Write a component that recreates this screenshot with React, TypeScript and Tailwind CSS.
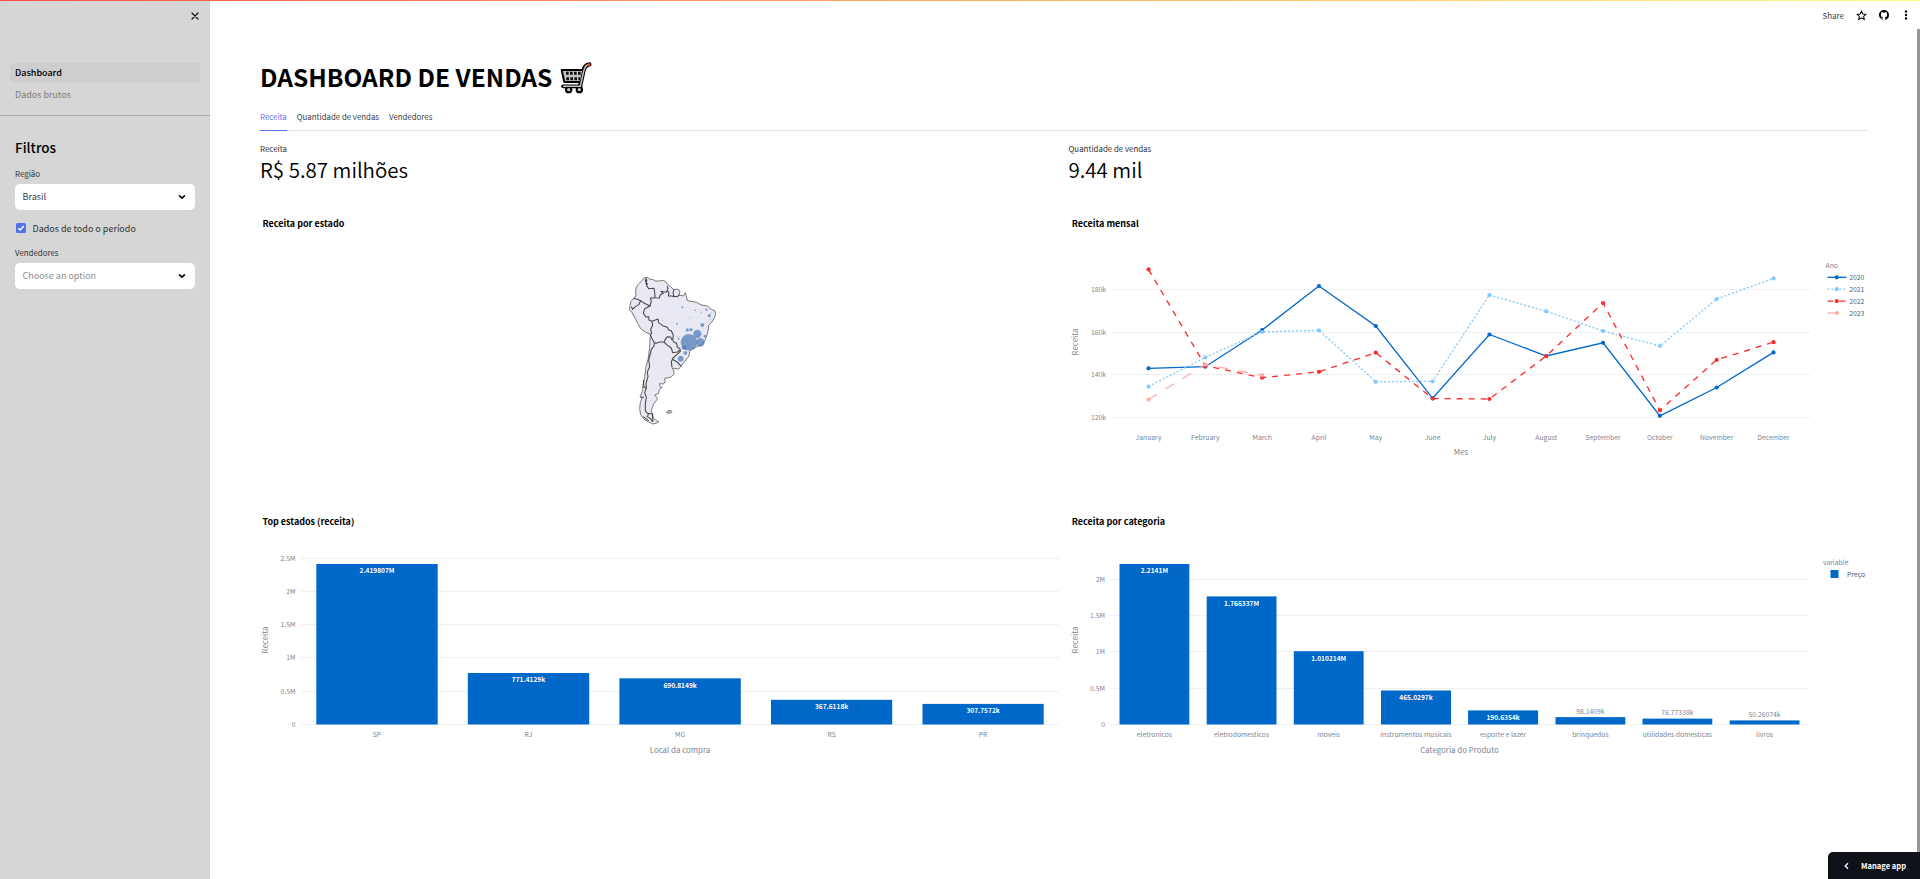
import React from "react";

const months = ["January", "February", "March", "April", "May", "June", "July", "August", "September", "October", "November", "December"];
const monthX = (i: number) => 1148 + i * 56.82;

const series = [
  { name: "2020", color: "#0068c9", dash: undefined, ys: [368.3, 366.7, 330, 286, 326, 398.3, 334.5, 356, 342.8, 415.8, 387.5, 352.4] },
  { name: "2021", color: "#83c9ff", dash: "2 2", ys: [386.6, 357.3, 332, 330.3, 381.8, 381.4, 295, 311.3, 331, 346, 299, 278.4] },
  { name: "2022", color: "#ff2b2b", dash: "6 6", ys: [269.4, 365.8, 377.7, 371.8, 352.7, 398.5, 399, 356, 303, 410.3, 359.8, 342.2] },
  { name: "2023", color: "#ffabab", dash: "10 10", ys: [399.5, 364.5, 375.2] },
];

type Bar = { label: string; x: number; w: number; top: number; value: string; outside?: boolean };

const stateBars: Bar[] = [
  { label: "SP", x: 316.3, w: 121.4, top: 564, value: "2.419807M" },
  { label: "RJ", x: 467.8, w: 121.4, top: 673, value: "771.4129k" },
  { label: "MG", x: 619.4, w: 121.4, top: 678.3, value: "690.8149k" },
  { label: "RS", x: 771, w: 121.2, top: 699.8, value: "367.6118k" },
  { label: "PR", x: 922.5, w: 121.2, top: 703.9, value: "307.7572k" },
];

const categoryBars: Bar[] = [
  { label: "eletronicos", x: 1119, w: 69.8, top: 564, value: "2.2141M" },
  { label: "eletrodomesticos", x: 1206.2, w: 69.8, top: 596.4, value: "1.766337M" },
  { label: "moveis", x: 1293.3, w: 69.8, top: 651.2, value: "1.010214M" },
  { label: "instrumentos musicais", x: 1380.5, w: 70, top: 690.5, value: "465.0297k" },
  { label: "esporte e lazer", x: 1467.6, w: 70, top: 710.4, value: "190.6354k" },
  { label: "brinquedos", x: 1555, w: 69.8, top: 717.1, value: "98.1409k", outside: true },
  { label: "utilidades domesticas", x: 1642, w: 69.8, top: 718.6, value: "76.77338k", outside: true },
  { label: "livros", x: 1729.2, w: 69.8, top: 720.4, value: "50.26074k", outside: true },
];

function ChartTitle({ x, y, children }: { x: number; y: number; children: string }) {
  return <text x={x} y={y} className="fill-black text-[9px] font-bold">{children}</text>;
}

function Grid({ x1, x2, ticks }: { x1: number; x2: number; ticks: [string, number][] }) {
  return (
    <>
      {ticks.map(([label, y]) => (
        <g key={label}>
          <rect x={x1} y={Math.floor(y)} width={x2 - x1} height={1} fill="#eef0f4" />
          <text x={x1 - 5.5} y={y + 2.8} textAnchor="end" className="fill-[#808495] text-[6.8px]">{label}</text>
        </g>
      ))}
    </>
  );
}

function AxisTitle({ x, y, vertical, children }: { x: number; y: number; vertical?: boolean; children: string }) {
  return (
    <text x={x} y={y} textAnchor="middle" transform={vertical ? `rotate(-90 ${x} ${y})` : undefined} className="fill-[#808495] text-[7.9px]">
      {children}
    </text>
  );
}

function Bars({ bars }: { bars: Bar[] }) {
  return (
    <>
      {bars.map((b) => (
        <g key={b.label}>
          <rect x={b.x} y={b.top} width={b.w} height={724.5 - b.top} fill="#0068c9" />
          {b.outside ? (
            <text x={b.x + b.w / 2} y={b.top - 3.6} textAnchor="middle" className="fill-[#808495] text-[6.8px]">{b.value}</text>
          ) : (
            <text x={b.x + b.w / 2} y={b.top + 9.3} textAnchor="middle" className="fill-white text-[6.6px] font-bold">{b.value}</text>
          )}
          <text x={b.x + b.w / 2} y={737} textAnchor="middle" className="fill-[#808495] text-[6.8px]">{b.label}</text>
        </g>
      ))}
    </>
  );
}

const bubbles: [number, number, number][] = [
  [267, 247, 25], [292, 222, 12.5], [301, 247, 13], [242, 296, 9], [253, 262, 8], [256, 279, 6], [307, 195, 6],
  [262, 210, 5], [273, 209, 5], [328, 167, 5], [315, 229, 4.5], [319, 149, 3.5], [231, 191, 3], [236, 236, 3],
  [247, 142, 3], [286, 151, 2.5], [304, 157, 1.8], [270, 173, 1.5], [187, 181, 1.5], [178, 140, 1], [333, 159, 1.5], [332, 176, 1.5], [236, 119, 1],
];

function MapChart() {
  return (
    <svg viewBox="260 205 799 297" className="h-[297px] w-[799px]">
      <ChartTitle x={262.5} y={227.4}>Receita por estado</ChartTitle>
      <g transform="translate(600 260) scale(0.33333)" strokeLinejoin="round">
        <path
          d="M140 52 L146 54 150 59 158 58 166 63 178 63 190 61 198 66 204 74 212 80 220 88 236 88 240 96 237 105 250 108 256 98 260 112 262 122 274 124 290 127 304 135 322 138 334 148 344 152 347 160 344 172 336 186 326 196 324 214 320 228 314 243 306 254 292 259 276 268 269 274 267 288 258 300 248 312 241 322 236 327 222 325 217 324 222 334 222 343 212 352 194 355 195 364 191 372 179 371 180 380 187 382 178 388 176 400 164 405 170 412 172 418 162 430 157 442 154 452 158 462 160 474 176 486 170 489 158 492 146 486 132 478 122 464 119 446 121 428 126 414 120 411 128 392 128 380 134 352 138 320 144 300 149 262 151 222 136 216 122 206 113 190 102 168 95 156 88 148 90 138 93 124 100 116 108 108 107 98 108 84 114 74 122 66 132 54 Z"
          fill="#e8e9f2" stroke="#777" strokeWidth="3"
        />
        <g fill="none" stroke="#484848" strokeWidth="3.2">
          <path d="M139 53 L136 62 143 73 138 70 141 58" />
          <path d="M138 62 L140 77 146 86 162 85 164 96 165 113 178 114 181 104 190 100 183 94 198 97 202 92 204 84 201 78" />
          <path d="M202 92 L207 98 205 108 216 108 222 110 219 98 222 88" />
          <path d="M219 109 L232 110 238 105" />
          <path d="M165 113 L151 115 154 124 150 138 138 132 130 128 122 122 112 118 100 115" />
          <path d="M122 122 L116 134 106 140 98 148 94 140" />
          <path d="M150 138 L134 146 130 160 138 171 146 170 147 180 156 184 174 177 176 188 188 197 202 202 206 210 214 212 220 226 218 240 222 246 230 250 232 262 240 266 241 274 228 286 219 294 214 306 216 322" />
          <path d="M156 184 L158 196 152 208 155 220 151 224 156 236 162 246 168 250 180 246 192 246 196 238 202 230 212 231 216 240" />
          <path d="M192 246 L200 254 214 264 218 278 232 276 240 270" />
          <path d="M217 298 L230 305 243 318" />
          <path d="M163 248 L162 258 154 268 150 286 146 300 149 320 142 336 144 350 138 370 139 384 134 398 139 412 136 430 136 452 142 460 156 462" />
          <path d="M157 462 L159 486 M146 460 L142 470 152 476 156 484 M130 470 L146 482" />
          <path d="M130 360 L132 382 138 384 M122 412 L132 412" />
        </g>
        <path d="M200 456 L206 451 216 453 214 458 202 460 Z M208 452 L207 459" fill="#e8e9f2" stroke="#666" strokeWidth="2.5" />
        {bubbles.map(([cx, cy, r]) => (
          <circle key={`${cx}-${cy}`} cx={cx} cy={cy} r={r} fill="#4c78b5" fillOpacity={0.72} stroke="#e8e9f2" strokeOpacity={0.5} strokeWidth={1} />
        ))}
      </g>
    </svg>
  );
}

function LineChart() {
  return (
    <svg viewBox="1068.5 205 799 297" className="h-[297px] w-[799px]">
      <ChartTitle x={1071.3} y={227.4}>Receita mensal</ChartTitle>
      <Grid x1={1111} x2={1810} ticks={[["180k", 289.3], ["160k", 332.3], ["140k", 374.5], ["120k", 417.3]]} />
      {series.map((s) => (
        <g key={s.name}>
          <polyline points={s.ys.map((y, i) => `${monthX(i)},${y}`).join(" ")} fill="none" stroke={s.color} strokeWidth={1.33} strokeDasharray={s.dash} />
          {s.ys.map((y, i) => <circle key={i} cx={monthX(i)} cy={y} r={2.1} fill={s.color} />)}
        </g>
      ))}
      {months.map((m, i) => (
        <text key={m} x={monthX(i)} y={440.2} textAnchor="middle" className="fill-[#808495] text-[6.8px]">{m}</text>
      ))}
      <AxisTitle x={1460.5} y={455}>Mes</AxisTitle>
      <AxisTitle x={1077.3} y={342} vertical>Receita</AxisTitle>
      <text x={1825} y={268} className="fill-[#808495] text-[6.8px]">Ano</text>
      {series.map((s, i) => (
        <g key={s.name}>
          <line x1={1827} x2={1846} y1={277.3 + i * 11.9} y2={277.3 + i * 11.9} stroke={s.color} strokeWidth={1.33} strokeDasharray={s.dash} />
          <circle cx={1836.3} cy={277.3 + i * 11.9} r={2.1} fill={s.color} />
          <text x={1848.8} y={280.1 + i * 11.9} className="fill-[#555867] text-[6.8px]">{s.name}</text>
        </g>
      ))}
    </svg>
  );
}

function StateChart() {
  return (
    <svg viewBox="260 502 799 297" className="h-[297px] w-[799px]">
      <ChartTitle x={262.5} y={524.6}>Top estados (receita)</ChartTitle>
      <Grid x1={301} x2={1059} ticks={[["2.5M", 558.4], ["2M", 591.4], ["1.5M", 624.5], ["1M", 657.6], ["0.5M", 691.3], ["0", 724.4]]} />
      <Bars bars={stateBars} />
      <AxisTitle x={680} y={753}>Local da compra</AxisTitle>
      <AxisTitle x={268.3} y={640} vertical>Receita</AxisTitle>
    </svg>
  );
}

function CategoryChart() {
  return (
    <svg viewBox="1068.5 502 799 297" className="h-[297px] w-[799px]">
      <ChartTitle x={1071.3} y={524.6}>Receita por categoria</ChartTitle>
      <Grid x1={1110} x2={1808.3} ticks={[["2M", 579.3], ["1.5M", 615.5], ["1M", 651.5], ["0.5M", 688.5], ["0", 724.4]]} />
      <Bars bars={categoryBars} />
      <AxisTitle x={1459} y={753}>Categoria do Produto</AxisTitle>
      <AxisTitle x={1077.3} y={640} vertical>Receita</AxisTitle>
      <text x={1822.5} y={565} className="fill-[#808495] text-[6.8px]">variable</text>
      <rect x={1830} y={570} width={8} height={8} fill="#0068c9" />
      <text x={1846.5} y={577.2} className="fill-[#555867] text-[6.8px]">Preço</text>
    </svg>
  );
}

function Cart() {
  return (
    <svg viewBox="0 0 96 96" className="h-8 w-8" strokeLinejoin="round" strokeLinecap="round">
      <path d="M61 68 L70 28 Q74 8 88 7" fill="none" stroke="#000" strokeWidth="13" />
      <path d="M5 24 H70 L62 60 H13 Z" fill="#c4c4c4" stroke="#000" strokeWidth="6" />
      <path d="M9 73 H62" stroke="#000" strokeWidth="11" />
      <circle cx="26" cy="83" r="8" fill="#c4c4c4" stroke="#000" strokeWidth="6" />
      <circle cx="58" cy="83" r="8" fill="#c4c4c4" stroke="#000" strokeWidth="6" />
      <path d="M11 73 H61 L71 28 Q75 12 82 9" fill="none" stroke="#c4c4c4" strokeWidth="4.5" />
      <path d="M83 8.5 L88 7.5" stroke="#f0503f" strokeWidth="7" />
      <path d="M18 34 H62 M19 50 H60" stroke="#111" strokeWidth="9" strokeDasharray="8 4" strokeLinecap="butt" />
    </svg>
  );
}

function Select({ value, muted }: { value: string; muted?: boolean }) {
  return (
    <div className="flex h-[26px] w-[180px] items-center justify-between rounded-[5px] bg-white pl-[7.5px] pr-[9.5px]">
      <span className={muted ? "text-[9px] text-[#8f8f8f]" : "text-[9px] text-[#404040]"}>{value}</span>
      <svg viewBox="0 0 8 8" className="h-2 w-2">
        <path d="M1.6 2.9 L4 5.2 L6.4 2.9" fill="none" stroke="#000" strokeWidth="1.6" strokeLinecap="round" strokeLinejoin="round" />
      </svg>
    </div>
  );
}

function Sidebar() {
  return (
    <aside className="flex w-[210px] shrink-0 flex-col bg-[#d6d6d6]">
      <div className="flex h-[63px] justify-end pr-[11px] pt-[12px]">
        <svg viewBox="0 0 8 8" className="h-2 w-2">
          <path d="M1 1 L7 7 M7 1 L1 7" stroke="#111" strokeWidth="1.2" strokeLinecap="round" />
        </svg>
      </div>
      <nav className="flex flex-col gap-[2px] border-b border-[#a9a9a9] px-[10px] pb-[10px]">
        <a className="flex h-5 items-center rounded-[3px] bg-[#cecece] px-[5px] text-[9px] font-medium text-black">Dashboard</a>
        <a className="flex h-5 items-center px-[5px] text-[9px] text-[#7d7d7d]">Dados brutos</a>
      </nav>
      <div className="flex flex-col px-[15px] pt-[21px]">
        <h2 className="h-[20px] text-[13.5px] leading-[21px] font-medium text-black">Filtros</h2>
        <label className="mt-[9px] h-[18px] text-[7.9px] leading-[16px] text-[#333]">Região</label>
        <Select value="Brasil" />
        <label className="mt-[10px] flex h-4 items-center gap-[6.5px] pl-[1px] text-[9px] text-[#333]">
          <span className="flex h-[10px] w-[10px] items-center justify-center rounded-[1.5px] bg-[#546ff0]">
            <svg viewBox="0 0 10 10" className="h-[10px] w-[10px]">
              <path d="M2.2 5.2 L4.2 7 L7.8 3" fill="none" stroke="#fff" strokeWidth="1.5" />
            </svg>
          </span>
          <span className="pt-px">Dados de todo o período</span>
        </label>
        <label className="mt-[9px] h-[18px] text-[7.9px] leading-[16px] text-[#333]">Vendedores</label>
        <Select value="Choose an option" muted />
      </div>
    </aside>
  );
}

function Toolbar() {
  return (
    <header className="flex h-[28px] items-center justify-end pr-[10px] pt-[2px]">
      <span className="mr-[12px] pt-px text-[8px] text-[#404040]">Share</span>
      <svg viewBox="0 0 24 24" className="mr-[12px] h-[11px] w-[11px]" fill="none" stroke="#000" strokeWidth="2.2">
        <path d="M12 2.5 L14.9 8.8 L21.7 9.5 L16.6 14.1 L18.1 20.9 L12 17.3 L5.9 20.9 L7.4 14.1 L2.3 9.5 L9.1 8.8 Z" />
      </svg>
      <svg viewBox="0 0 16 16" className="mr-[13px] h-[10px] w-[10px]">
        <path d="M8 0C3.58 0 0 3.58 0 8c0 3.54 2.29 6.53 5.47 7.59.4.07.55-.17.55-.38 0-.19-.01-.82-.01-1.49-2.01.37-2.53-.49-2.69-.94-.09-.23-.48-.94-.82-1.13-.28-.15-.68-.52-.01-.53.63-.01 1.08.58 1.23.82.72 1.21 1.87.87 2.33.66.07-.52.28-.87.51-1.07-1.78-.2-3.64-.89-3.64-3.95 0-.87.31-1.59.82-2.15-.08-.2-.36-1.02.08-2.12 0 0 .67-.21 2.2.82.64-.18 1.32-.27 2-.27s1.36.09 2 .27c1.53-1.04 2.2-.82 2.2-.82.44 1.1.16 1.92.08 2.12.51.56.82 1.27.82 2.15 0 3.07-1.87 3.75-3.65 3.95.29.25.54.73.54 1.48 0 1.07-.01 1.93-.01 2.2 0 .21.15.46.55.38A8.01 8.01 0 0 0 16 8c0-4.42-3.58-8-8-8z" />
      </svg>
      <svg viewBox="0 0 8 10" className="h-[10px] w-2">
        <circle cx="4" cy="1.5" r="1.2" />
        <circle cx="4" cy="5" r="1.2" />
        <circle cx="4" cy="8.5" r="1.2" />
      </svg>
    </header>
  );
}

function Metric({ label, value }: { label: string; value: string }) {
  return (
    <div className="flex h-[63px] w-[799px] flex-col">
      <span className="h-[14px] text-[7.9px] leading-[14px] text-[#333]">{label}</span>
      <span className="h-[30px] text-[20.5px] leading-[27px] font-[350] text-black">{value}</span>
    </div>
  );
}

export default function App() {
  return (
    <div className="relative flex h-[879px] w-[1920px] overflow-hidden bg-white font-['Noto_Sans_CJK_SC','Noto_Sans',sans-serif]">
      <Sidebar />
      <main className="flex flex-1 flex-col">
        <Toolbar />
        <div className="flex flex-col pl-[50px] pr-[52px]">
          <h1 className="mt-[32px] flex h-[36px] items-center gap-[8px] text-[24.5px] font-bold text-black">
            <span className="whitespace-nowrap pb-[2px] leading-[34px]">DASHBOARD DE VENDAS</span>
            <Cart />
          </h1>
          <div className="mt-[8px] flex h-[27px] items-center gap-[10px] border-b border-[#e3e3e5] text-[7.85px] text-[#404040]">
            <span className="-mb-px flex h-[27px] items-center border-b border-[#546ff0] text-[#6672ee]">Receita</span>
            <span>Quantidade de vendas</span>
            <span>Vendedores</span>
          </div>
          <div className="mt-[11px] flex gap-[9.5px]">
            <Metric label="Receita" value="R$ 5.87 milhões" />
            <Metric label="Quantidade de vendas" value="9.44 mil" />
          </div>
          <div className="grid grid-cols-[799px_799px] gap-x-[9.5px]">
            <MapChart />
            <LineChart />
            <StateChart />
            <CategoryChart />
          </div>
        </div>
      </main>
      <div className="absolute left-0 top-0 h-px w-full bg-linear-to-r from-[#ff4b4b] to-[#fffd80]" />
      <div className="absolute bottom-0 right-0 top-[29px] w-[3px] bg-[#979797]" />
      <button className="absolute bottom-0 right-0 flex h-[27px] w-[92px] items-center rounded-tl-[5px] bg-[#0e1117] pl-[15px] text-[7.6px] font-bold text-white">
        <svg viewBox="0 0 8 8" className="mr-[10px] h-2 w-2">
          <path d="M5 1.2 L2.2 4 L5 6.8" fill="none" stroke="#fff" strokeWidth="1.3" />
        </svg>
        Manage app
      </button>
    </div>
  );
}
